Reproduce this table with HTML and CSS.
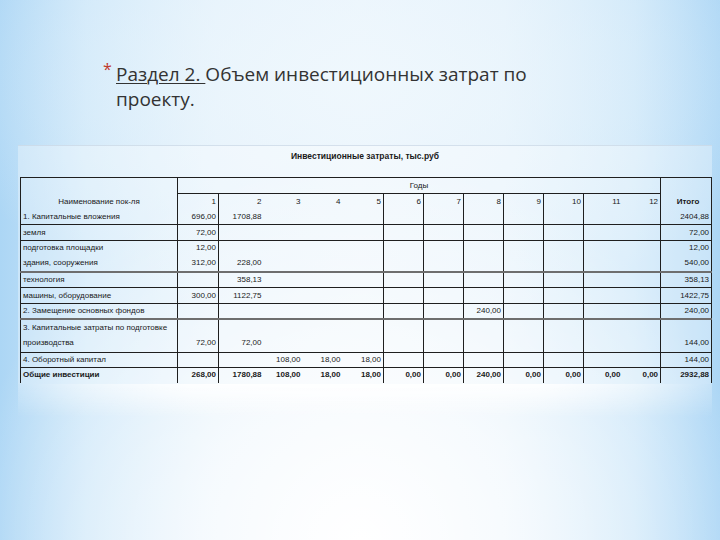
FILE: index.html
```html
<!DOCTYPE html>
<html lang="ru">
<head>
<meta charset="utf-8">
<title>Раздел 2. Объем инвестиционных затрат по проекту</title>
<link rel="stylesheet" href="styles.css">
</head>
<body>
<div class="slide">
  <h1 class="title"><span class="star">*</span><span class="text"><u>Раздел 2. </u>Объем инвестиционных затрат по<br>проекту.</span></h1>
  <div class="sheet">
    <div class="caption">Инвестиционные затраты, тыс.руб</div>
    <table class="grid">
      <colgroup>
        <col class="c-label">
        <col class="c1 vl">
        <col class="c2">
        <col class="c3">
        <col class="c4">
        <col class="c5 vl">
        <col class="c6 vl">
        <col class="c7 vl">
        <col class="c8 vl">
        <col class="c9 vl">
        <col class="c10 vl">
        <col class="c11">
        <col class="c12 vl">
        <col class="c-total vl">
      </colgroup>
      <tr class="h16">
        <td rowspan="2" class="head-label">Наименование пок-ля</td>
        <td colspan="12" class="years">Годы</td>
        <td rowspan="2" class="head-total">Итого</td>
      </tr>
      <tr class="h16">
        <td>1</td><td>2</td><td>3</td><td>4</td><td>5</td><td>6</td><td>7</td><td>8</td><td>9</td><td>10</td><td>11</td><td>12</td>
      </tr>
      <tr class="h15 b">
        <td class="lbl">1. Капитальные вложения</td>
        <td>696,00</td><td>1708,88</td><td></td><td></td><td></td><td></td><td></td><td></td><td></td><td></td><td></td><td></td>
        <td>2404,88</td>
      </tr>
      <tr class="h16 b">
        <td class="lbl">земля</td>
        <td>72,00</td><td></td><td></td><td></td><td></td><td></td><td></td><td></td><td></td><td></td><td></td><td></td>
        <td>72,00</td>
      </tr>
      <tr class="h15">
        <td class="lbl">подготовка площадки</td>
        <td>12,00</td><td></td><td></td><td></td><td></td><td></td><td></td><td></td><td></td><td></td><td></td><td></td>
        <td>12,00</td>
      </tr>
      <tr class="h16 g">
        <td class="lbl">здания, сооружения</td>
        <td>312,00</td><td>228,00</td><td></td><td></td><td></td><td></td><td></td><td></td><td></td><td></td><td></td><td></td>
        <td>540,00</td>
      </tr>
      <tr class="h16 b">
        <td class="lbl">технология</td>
        <td></td><td>358,13</td><td></td><td></td><td></td><td></td><td></td><td></td><td></td><td></td><td></td><td></td>
        <td>358,13</td>
      </tr>
      <tr class="h16 b">
        <td class="lbl">машины, оборудование</td>
        <td>300,00</td><td>1122,75</td><td></td><td></td><td></td><td></td><td></td><td></td><td></td><td></td><td></td><td></td>
        <td>1422,75</td>
      </tr>
      <tr class="h15 g">
        <td class="lbl">2. Замещение основных фондов</td>
        <td></td><td></td><td></td><td></td><td></td><td></td><td></td><td>240,00</td><td></td><td></td><td></td><td></td>
        <td>240,00</td>
      </tr>
      <tr class="h33 b low">
        <td class="lbl">3. Капитальные затраты по подготовке<br>производства</td>
        <td>72,00</td><td>72,00</td><td></td><td></td><td></td><td></td><td></td><td></td><td></td><td></td><td></td><td></td>
        <td>144,00</td>
      </tr>
      <tr class="h15 b">
        <td class="lbl">4. Оборотный капитал</td>
        <td></td><td></td><td>108,00</td><td>18,00</td><td>18,00</td><td></td><td></td><td></td><td></td><td></td><td></td><td></td>
        <td>144,00</td>
      </tr>
      <tr class="h16 total">
        <td class="lbl">Общие инвестиции</td>
        <td>268,00</td><td>1780,88</td><td>108,00</td><td>18,00</td><td>18,00</td><td>0,00</td><td>0,00</td><td>240,00</td><td>0,00</td><td>0,00</td><td>0,00</td><td>0,00</td>
        <td>2932,88</td>
      </tr>
    </table>
  </div>
  <div class="glow"></div>
</div>
</body>
</html>
```

FILE: styles.css
```css
html, body {
  margin: 0;
  padding: 0;
}

.slide {
  width: 720px;
  height: 540px;
  overflow: hidden;
  background:
    radial-gradient(ellipse 55% 70% at 50% 100%, rgba(255,255,255,1) 0%, rgba(255,255,255,0.7) 40%, rgba(255,255,255,0) 100%),
    radial-gradient(ellipse 60% 45% at 50% 15%, rgba(240,248,253,0.9) 0%, rgba(240,248,253,0) 100%),
    linear-gradient(to right, #acd6f5 0%, #cbe6f9 12%, #e1f0fb 30%, #e8f3fc 50%, #e1f0fb 70%, #cbe6f9 88%, #acd6f5 100%);
  display: flex;
  flex-direction: column;
}

.title {
  margin: 62px 0 0 103px;
  display: flex;
  align-items: flex-start;
  font-family: "Open Sans", "Noto Sans", sans-serif;
  font-weight: 400;
  font-size: 19px;
  line-height: 25px;
  color: #333333;
}

.star {
  color: #c0392b;
  font-size: 16px;
  line-height: 17px;
  margin-top: -1px;
  width: 13px;
}

.text u {
  text-decoration-thickness: 1px;
  text-underline-offset: 2px;
}

.sheet {
  margin: 33px 0 0 18px;
  width: 694px;
  height: 238px;
  background: rgba(255, 255, 255, 0.32);
  border-top: 1px solid rgba(200, 214, 228, 0.7);
  font-family: "Liberation Sans", Arial, sans-serif;
  font-size: 8px;
  color: #1a1a1a;
}

.caption {
  height: 31px;
  line-height: 20px;
  text-align: center;
  font-weight: bold;
  font-size: 8.5px;
}

.grid {
  margin-left: 2px;
  border-collapse: collapse;
  table-layout: fixed;
  width: 691px;
  border-top: 1px solid #1f1f1f;
}

.c-label { width: 157px; border-left: 1px solid #1f1f1f; border-right: 1px solid #1f1f1f; }
.c1 { width: 41px; }
.c2 { width: 45px; }
.c3 { width: 39px; }
.c4 { width: 40px; }
.c5 { width: 41px; }
.c6, .c7, .c8, .c9, .c10 { width: 40px; }
.c11 { width: 39px; }
.c12 { width: 38px; }
.c-total { width: 51px; }
.vl { border-right: 1px solid #1f1f1f; }

.grid td {
  padding: 0 2px 0 2px;
  text-align: right;
  vertical-align: middle;
  white-space: nowrap;
  line-height: 10px;
}

.h15 { height: 15px; }
.h16 { height: 16px; }
.h33 { height: 33px; }

.b { border-bottom: 1px solid #1f1f1f; }
.g { border-bottom: 2px solid #6e6e6e; }

.grid td.lbl {
  text-align: left;
  padding-left: 2px;
}

.low td {
  vertical-align: bottom;
  padding-bottom: 2px;
  line-height: 15px;
}

.grid td.head-label {
  text-align: center;
  vertical-align: bottom;
  padding-bottom: 3px;
}

.grid td.years {
  text-align: center;
  border-bottom: 1px solid #1f1f1f;
}

.grid td.head-total {
  text-align: center;
  vertical-align: bottom;
  padding-bottom: 3px;
  padding-left: 6px;
  font-weight: bold;
}

.total td {
  font-weight: bold;
}

.glow {
  margin-left: 18px;
  width: 694px;
  height: 34px;
  background: linear-gradient(to bottom, rgba(255,255,255,0.9) 0%, rgba(255,255,255,0.55) 45%, rgba(255,255,255,0) 100%);
  -webkit-mask-image: linear-gradient(to right, rgba(0,0,0,0.3) 0%, #000 25%, #000 75%, rgba(0,0,0,0.3) 100%);
  mask-image: linear-gradient(to right, rgba(0,0,0,0.3) 0%, #000 25%, #000 75%, rgba(0,0,0,0.3) 100%);
}
```
